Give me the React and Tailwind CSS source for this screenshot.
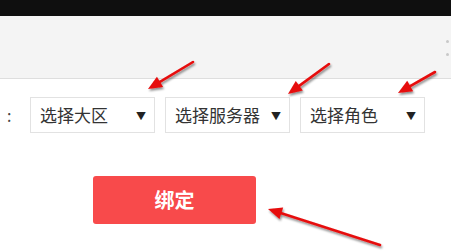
const selects = ['选择大区', '选择服务器', '选择角色']

const arrows = [
  { from: [193, 62], to: [148, 89] },
  { from: [329, 64], to: [288, 94] },
  { from: [435, 72], to: [398, 93] },
  { from: [380, 245], to: [268, 209] },
]

function head(from, to) {
  const dx = to[0] - from[0]
  const dy = to[1] - from[1]
  const len = Math.hypot(dx, dy)
  const ux = dx / len
  const uy = dy / len
  const bx = to[0] - ux * 14
  const by = to[1] - uy * 14
  const w = 6
  return `${to[0]},${to[1]} ${bx - uy * w},${by + ux * w} ${bx + uy * w},${by - ux * w}`
}

function Arrows() {
  return (
    <svg className="pointer-events-none absolute left-0 top-0" width="451" height="252">
      <defs>
        <filter id="sh" x="-20%" y="-20%" width="140%" height="140%">
          <feDropShadow dx="1" dy="2" stdDeviation="1.2" floodColor="#000" floodOpacity="0.45" />
        </filter>
      </defs>
      {arrows.map((a, i) => {
        const dx = a.to[0] - a.from[0]
        const dy = a.to[1] - a.from[1]
        const len = Math.hypot(dx, dy)
        const ex = a.to[0] - (dx / len) * 10
        const ey = a.to[1] - (dy / len) * 10
        return (
          <g key={i} filter="url(#sh)">
            <line x1={a.from[0]} y1={a.from[1]} x2={ex} y2={ey} stroke="#e60c0c" strokeWidth="2.6" strokeLinecap="round" />
            <polygon points={head(a.from, a.to)} fill="#e60c0c" />
          </g>
        )
      })}
    </svg>
  )
}

export default function App() {
  return (
    <div className="relative h-[252px] w-[451px] overflow-hidden bg-white font-['Noto_Sans_CJK_SC','Microsoft_YaHei',sans-serif]">
      <div className="h-4 bg-[#0f0f0f]" />
      <div className="flex h-[63px] justify-end border-b border-[#dedede] bg-[#f4f4f4] pt-6">
        <div className="mr-[2px] flex flex-col gap-[10px]">
          <span className="h-[3px] w-[3px] rounded-full bg-[#c8c8c8]" />
          <span className="h-[3px] w-[3px] rounded-full bg-[#c8c8c8]" />
        </div>
      </div>
      <div className="mt-[18px] flex items-center">
        <span className="w-[30px] pl-[7px] text-[16px] text-[#444]">:</span>
        <div className="flex gap-[10px]">
          {selects.map((s) => (
            <div
              key={s}
              className="flex h-[36px] w-[125px] items-center justify-between border border-[#e2e2e2] bg-white pl-[9px] pr-[8px] text-[17px] text-[#333]"
            >
              <span>{s}</span>
              <span className="text-[10px] text-[#222]">▼</span>
            </div>
          ))}
        </div>
      </div>
      <div className="mt-[43px] pl-[93px]">
        <button className="flex h-[48px] w-[163px] items-center justify-center rounded-[3px] bg-[#f84a4b] text-[20px] font-bold text-white">
          绑定
        </button>
      </div>
      <Arrows />
    </div>
  )
}
